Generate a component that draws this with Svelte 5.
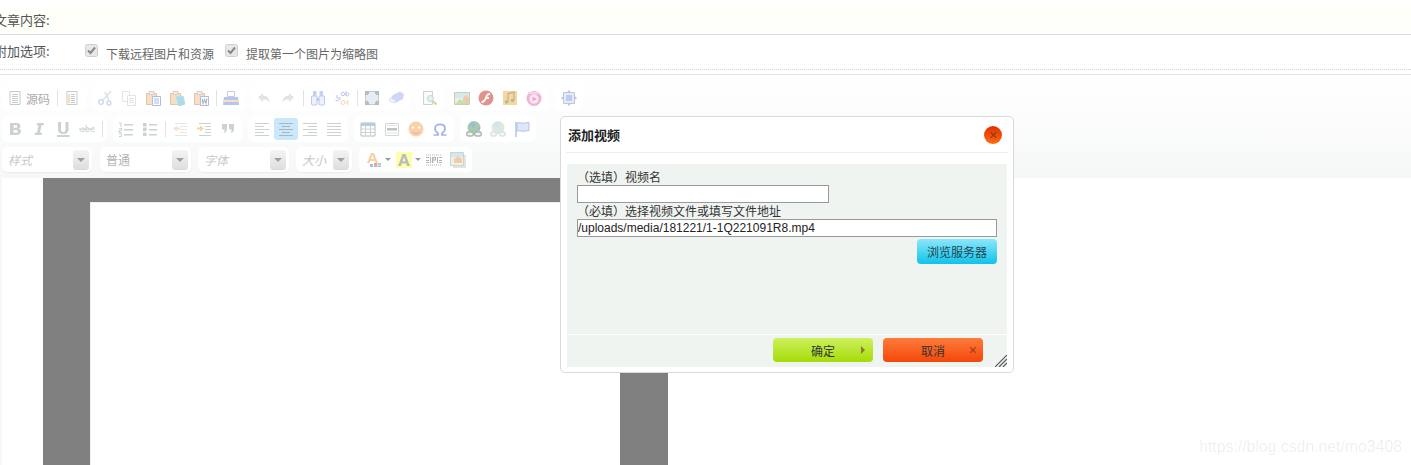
<script>
  const L = '#9aa7a3';
  const I = {
    doc: `<path d="M3 1.500h10v13H3z" fill="#fff" stroke="#8d9a96"/><path d="M5 4.500h6M5 6.500h6M5 8.500h6M5 10.500h6M5 12.500h6" stroke="#8d9a96"/>`,
    tpl: `<path d="M3 1.500h10v13H3z" fill="#fff" stroke="#8d9a96"/><path d="M7 4.500h4M7 6.500h4M7 8.500h4M7 10.500h4M7 12.500h4" stroke="#8d9a96"/><path d="M5 4v9" stroke="#f3a53c" stroke-width="1.400"/>`,
    cut: `<path d="M14 1 6 10M8 2l4 8" stroke="#b9c7dd" stroke-width="1.600"/><circle cx="4" cy="12" r="2.300" fill="none" stroke="#9fb4e4" stroke-width="1.400"/><circle cx="12" cy="13" r="2" fill="none" stroke="#9fb4e4" stroke-width="1.400"/>`,
    copy: `<path d="M1.500 1.500h7v10h-7z" fill="#fff" stroke="#c4cfcb"/><path d="M6.500 5.500h8v10h-8z" fill="#fff" stroke="#c4cfcb"/><path d="M8 8.500h5M8 10.500h5M8 12.500h5" stroke="#c4cfcb"/>`,
    paste: `<path d="M1.500 3.500h10v11h-10z" fill="#f2c08a" stroke="#c98d52"/><path d="M4 1.500h5v3H4z" fill="#e8e2d6" stroke="#a99"/><path d="M7.500 6.500h8v9h-8z" fill="#fff" stroke="#5f78cf"/><path d="M9 9h5M9 11h5M9 13h5" stroke="#5f78cf"/>`,
    pastet: `<path d="M1.500 3.500h10v11h-10z" fill="#f2c08a" stroke="#c98d52"/><path d="M4 1.500h5v3H4z" fill="#e8e2d6" stroke="#a99"/><path d="M7 7l7-1 2 8-6 2z" fill="#59b7e8" stroke="#7bb"/>`,
    pastew: `<path d="M1.500 3.500h10v11h-10z" fill="#f2c08a" stroke="#c98d52"/><path d="M4 1.500h5v3H4z" fill="#e8e2d6" stroke="#a99"/><path d="M7.500 6.500h8v9h-8z" fill="#fff" stroke="#5f78cf"/><path d="M9 8.500l1 5 1.500-4 1.500 4 1-5" fill="none" stroke="#566" stroke-width="1.100"/>`,
    print: `<path d="M4.500 1.500h7v5h-7z" fill="#fff" stroke="#8a97c9"/><path d="M1 7h14l1 8H0z" fill="#6f8be0"/><path d="M1 10h14v2H1z" fill="#f1c27d"/>`,
    undo: `<path d="M7 3 2 7.500 7 12V9.500c3 0 5 .5 6.500 3 0-4-2.500-7-6.500-7z" fill="#c4cbc8"/>`,
    redo: `<path d="M9 3l5 4.500L9 12V9.500c-3 0-5 .5-6.500 3 0-4 2.500-7 6.500-7z" fill="#c4cbc8"/>`,
    find: `<rect x="3" y="1" width="3.500" height="5" fill="#8ea2e8"/><rect x="9.500" y="1" width="3.500" height="5" fill="#8ea2e8"/><rect x="1.500" y="6" width="5.500" height="9" rx="1" fill="#dfe6fa" stroke="#7e93e0"/><rect x="9" y="6" width="5.500" height="9" rx="1" fill="#dfe6fa" stroke="#7e93e0"/><path d="M7 8h2v3H7z" fill="#7e93e0"/>`,
    replace: `<circle cx="9" cy="4" r="1.700" fill="none" stroke="#7e8fe0"/><path d="M12 1v5" stroke="#7e8fe0"/><circle cx="13.500" cy="4.500" r="1.500" fill="none" stroke="#7e8fe0"/><path d="M7 8H3V5M1.500 9.500 3 11l3-2" stroke="#7e8fe0" fill="none"/><circle cx="9" cy="12.500" r="2" fill="none" stroke="#e9b25f"/><path d="M15 11h-2v3h2" stroke="#e9b25f" fill="none"/>`,
    full: `<path d="M1.500 1.500h13v13h-13z" fill="#cfdcf0" stroke="#8e9c98"/><path d="M1 1h4v3H4v1H1zM11 1h4v4h-3V4h-1zM1 11h3v1h1v3H1zM12 11h3v4h-4v-3h1z" fill="#6f7f7c"/>`,
    erase: `<path d="M5 5 12 1.500 16 4 15 9 7 13 1 11z" fill="#9fb2ea"/><path d="M1 11l6 2 .5-3L2 8z" fill="#e6ecfa" stroke="#8ea2e8" stroke-width=".5"/>`,
    preview: `<path d="M2.500 1.500h9v13h-9z" fill="#f6f6f4" stroke="#9aa"/><circle cx="9.500" cy="8.500" r="3" fill="#cfe0f4" stroke="#8a9"/><path d="M11.500 11l4 3.500" stroke="#c99c4a" stroke-width="2"/>`,
    img: `<path d="M.5 2.500h15v12H.5z" fill="#d8e6c0" stroke="#a89a5a"/><path d="M1 3h14v5H1z" fill="#a9d0ee"/><path d="M1 14l5-5 3 2 3-3 3 3v3z" fill="#8fbf68"/><path d="M9 8l3-3 3 3v3H9z" fill="#e89060"/>`,
    flash: `<circle cx="8" cy="8" r="7.500" fill="#c8261a"/><path d="M12 3c-4 0-4 3-5 5s-2 3-3.500 3v2c3 0 4-2 5-4s1-4 3.500-4z" fill="#fff"/><path d="M7 7h4v2H7z" fill="#fff"/>`,
    music: `<path d="M1 1h14v14H1z" fill="#f1b13f"/><path d="M6 3.500l6-1.500v8.500" stroke="#7d6c3a" stroke-width="1.300" fill="none"/><path d="M6 3.500V12" stroke="#7d6c3a" stroke-width="1.300"/><circle cx="4.500" cy="12" r="1.700" fill="#7d6c3a"/><circle cx="10.500" cy="10.500" r="1.700" fill="#7d6c3a"/>`,
    video: `<circle cx="8" cy="8.500" r="7.500" fill="#e56cb0"/><circle cx="8" cy="9" r="4.500" fill="#fbd5ea"/><path d="M6.500 6.500 11 9l-4.500 2.500z" fill="#df4f9e"/><path d="M2 2h11v2H2z" fill="#f4a6cc"/>`,
    anyfile: `<path d="M8 0l2 2.500H6zM8 16l2-2.500H6zM0 8l2.500-2v4zM16 8l-2.500-2v4z" fill="#7c90b4"/><path d="M2.500 2.500h11v11h-11z" fill="#cbd7f4" stroke="#7c90b4"/><path d="M5 5h6v6H5z" fill="#7f98e6"/>`,
    bold: `<path d="M3 2h6.500c3 0 4 1.500 4 3 0 1.300-.8 2.200-2 2.600 1.600.4 2.500 1.400 2.500 3 0 2.300-1.700 3.400-4.500 3.400H3zm3.500 2.300V6.800h2.300c1 0 1.500-.5 1.500-1.300 0-.8-.5-1.200-1.500-1.200zm0 4.800v2.600h2.500c1 0 1.700-.4 1.700-1.300s-.7-1.300-1.700-1.300z" fill="${L}"/>`,
    italic: `<path d="M6 2h7l-.5 2.300h-2L9 11.700h2L10.500 14h-7L4 11.700h2L7.500 4.300h-2z" fill="${L}"/>`,
    under: `<path d="M3 1h3v7c0 2 .8 3 2.300 3 1.500 0 2.200-1 2.200-3V1h3v7.500c0 3-1.900 4.500-5.200 4.500S3 11.500 3 8.500zM2 14h12.500v2H2z" fill="${L}"/>`,
    strike: `<path d="M0 8h16" stroke="${L}"/><path d="M3 6.500c1.500 0 1.800.5 1.800 4H3c-1.300 0-1.800-.5-1.800-1.200S1.800 8 3.500 8M7 4v6.500M7 7c2-1 3-.5 3 1.500s-1 3-3 1.500M15.500 7c-2-1-3.500 0-3.500 1.700s1.500 2.700 3.500 1.600" stroke="${L}" fill="none"/>`,
    ol: `<path d="M1 2h2v4M1 7.500h2.500v2H1v2h2.500M1 13h2.500v2.500H1" stroke="${L}" fill="none"/><path d="M6 3h9v1.500H6zM6 8h9v1.500H6zM6 13h9v1.500H6z" fill="${L}"/>`,
    ul: `<path d="M1 2h3.500v3.500H1zM1 6.500h3.500V10H1zM1 11.500h3.500V15H1zM7 3h8v1.500H7zM7 8h8v1.500H7zM7 13h8v1.500H7z" fill="${L}"/>`,
    outdent: `<path d="M1 7.500 5 4.500v2h3v2H5v2z" fill="#f6c48e"/><path d="M3 2h12v1H3zM8 5h7v1H8zM8 8h7v1H8zM8 11h7v1H8zM3 14h12v1H3z" fill="#c9d1ce"/>`,
    indent: `<path d="M8 7.500 4 4.500v2H1v2h3v2z" fill="#f2a846"/><path d="M3 2h12v1H3zM9 5h6v1H9zM9 8h6v1H9zM9 11h6v1H9zM3 14h12v1H3z" fill="${L}"/>`,
    quote: `<path d="M2 3h5v5c0 2-1.500 4-3.500 4 .7-1 1.200-2 1.200-3.500H2zM9 3h5v5c0 2-1.500 4-3.500 4 .7-1 1.200-2 1.200-3.500H9z" fill="${L}"/>`,
    al: `<path d="M1 2h14v1H1zM1 5h9v1H1zM1 8h14v1H1zM1 11h9v1H1zM1 14h14v1H1z" fill="${L}"/>`,
    ac: `<path d="M1 2h14v1H1zM4 5h8v1H4zM1 8h14v1H1zM4 11h8v1H4zM1 14h14v1H1z" fill="#7c8b87"/>`,
    ar: `<path d="M1 2h14v1H1zM6 5h9v1H6zM1 8h14v1H1zM6 11h9v1H6zM1 14h14v1H1z" fill="${L}"/>`,
    aj: `<path d="M1 2h14v1H1zM1 5h14v1H1zM1 8h14v1H1zM1 11h14v1H1zM1 14h14v1H1z" fill="${L}"/>`,
    table: `<path d="M1 2h14v13H1z" fill="#fff" stroke="#6f8080"/><path d="M1 2h14v3H1z" fill="#7e98c4"/><path d="M1 8h14M1 11.500h14M5.500 5v10M10.500 5v10" stroke="#9aa9a6"/>`,
    hr: `<path d="M1.500 2.500h13v12h-13z" fill="#fff" stroke="#a8b2af"/><path d="M3 7h10v2.500H3z" fill="#7c8b87"/><path d="M3 4.500h10M3 12h10" stroke="#c3cbc8"/>`,
    smile: `<circle cx="8" cy="8" r="7.500" fill="#f7a34f"/><circle cx="5" cy="6.500" r="1.300" fill="#fff"/><circle cx="11" cy="6.500" r="1.300" fill="#fff"/><path d="M4 10.500c2 2.500 6 2.500 8 0" stroke="#b9602a" fill="none"/>`,
    omega: `<path d="M1.500 14H6v-1.800C4 11 3 9.500 3 7.500 3 4.800 5 3.300 8 3.300s5 1.500 5 4.200c0 2-1 3.500-3 4.700V14h4.500" stroke="#4d64cf" stroke-width="1.700" fill="none"/>`,
    link: `<circle cx="8" cy="6.500" r="6.500" fill="#4f9b5d"/><path d="M3 4l4-3 3 3-2 3zM10 8l4-2v3z" fill="#3d74c0"/><path d="M1 10.500h14v2H1z" fill="#4f9b5d"/><rect x=".7" y="11" width="6.600" height="4" rx="2" fill="#dfe7e4" stroke="#5f6f6c" stroke-width="1.400"/><rect x="8.700" y="11" width="6.600" height="4" rx="2" fill="#dfe7e4" stroke="#5f6f6c" stroke-width="1.400"/>`,
    unlink: `<circle cx="8" cy="6.500" r="6.500" fill="#b8d7be"/><path d="M3 4l4-3 3 3-2 3z" fill="#a9c4e8"/><rect x=".7" y="11" width="5.600" height="4" rx="2" fill="#eef2f0" stroke="#bcc7c4" stroke-width="1.400"/><rect x="9.700" y="11" width="5.600" height="4" rx="2" fill="#eef2f0" stroke="#bcc7c4" stroke-width="1.400"/>`,
    anchor: `<path d="M2 1v15" stroke="#6a86d8" stroke-width="1.500"/><path d="M3 2c3-1 5 1 8 0 1.500-.3 3-.5 4-.5v8c-1 0-2.500.2-4 .5-3 1-5-1-8 0z" fill="#bfcff2" stroke="#6a86d8"/>`,
    fc: `<path d="M5 1h3l4 10H9.500l-.7-2H4.300l-.7 2H1zM5 7h3L6.500 3z" fill="#f5a84a"/><path d="M8 11h3v4H8z" fill="#dd4d40"/><path d="M11.500 11h3.500v2h-3.500z" fill="#56b85e"/><path d="M11.500 13.500h3.500V15h-3.500zM4 12h3v3H4z" fill="#5379dc"/>`,
    bc: `<path d="M0 0h16v16H0z" fill="#ffff5a"/><path d="M6.500 2h3L14 14h-3l-.8-2.500H5.800L5 14H2zM6.600 9.300h2.800L8 5z" fill="#74807c"/>`,
    nbsp: `<path d="M0 3h16M0 13h16" stroke="#5f6d6a" stroke-dasharray="1 1"/><path d="M0 5h3v1H0zM0 8h3v1H0zM0 10h3v1H0zM13 5h3v1h-3zM13 8h3v1h-3zM13 10h3v1h-3zM4 5h1v6H4zM6 5h4v3.500H7.300V11H6zM7.300 6v1.500h1.500V6zM11 5h1v6h-1z" fill="#5f6d6a"/>`,
    pagebreak: `<path d="M.5 .5h13v13H.5z" fill="#dde6cf" stroke="#a0aa9a"/><path d="M1 1h12v4H1z" fill="#a9cee8"/><path d="M4 7l4-3 4 3v4H4z" fill="#e89a5a"/><path d="M14 3h2v13H3v-2h11z" fill="#c5cbc7"/>`
  };
  const rows = [
    [
      { items: ['source', 's', 'tpl'] },
      { items: ['cut', 'copy', 'paste', 'pastet', 'pastew', 's', 'print'] },
      { items: ['undo', 'redo', 's', 'find', 'replace', 's', 'full', 'erase'] },
      { items: ['preview'] },
      { items: ['img', 'flash', 'music', 'video'] },
      { items: ['anyfile'], cls: 'g6' }
    ],
    [
      { items: ['bold', 'italic', 'under', 'strike', 's'] },
      { items: ['ol', 'ul', 's', 'outdent', 'indent', 'quote'], cls: 'gp' },
      { items: ['al', 'ac', 'ar', 'aj'], cls: 'gp' },
      { items: ['table', 'hr', 'smile', 'omega'], cls: 'gp' },
      { items: ['link', 'unlink', 'anchor'], cls: 'gp' }
    ]
  ];
  const combos = [
    { t: '样式', w: 90, it: true, ml: 0 },
    { t: '普通', w: 91, it: false, ml: 1 },
    { t: '字体', w: 91, it: true, ml: 0 },
    { t: '大小', w: 56, it: true, ml: 0 }
  ];
</script>

<div class="page">
  <div class="row-content"><span class="lbl">文章内容:</span></div>
  <div class="row-extra">
    <span class="lbl lbl2">附加选项:</span>
    <span class="check first">
      <svg width="13" height="13" viewBox="0 0 13 13"><rect x=".5" y=".5" width="12" height="12" rx="2" fill="#e8e8e8" stroke="#cfcfcf"/><path d="M3 6.500 5.500 9 10 3.500" fill="none" stroke="#888" stroke-width="2"/></svg>
    </span>
    <span class="opt">下载远程图片和资源</span>
    <span class="check second">
      <svg width="13" height="13" viewBox="0 0 13 13"><rect x=".5" y=".5" width="12" height="12" rx="2" fill="#e8e8e8" stroke="#cfcfcf"/><path d="M3 6.500 5.500 9 10 3.500" fill="none" stroke="#888" stroke-width="2"/></svg>
    </span>
    <span class="opt">提取第一个图片为缩略图</span>
  </div>
  <div class="toolbar">
    {#each rows as row}
      <div class="tb-row">
        {#each row as g}
          <div class="g {g.cls ?? ''}">
            {#each g.items as it}
              {#if it === 's'}
                <span class="sep"></span>
              {:else if it === 'source'}
                <span class="btn source">
                  <svg class="ic" width="16" height="16" viewBox="0 0 16 16">{@html I.doc}</svg>
                  <span class="src">源码</span>
                </span>
              {:else}
                <span class="btn" class:on={it === 'ac'}>
                  <svg class="ic" width="16" height="16" viewBox="0 0 16 16">{@html I[it]}</svg>
                </span>
              {/if}
            {/each}
          </div>
        {/each}
      </div>
    {/each}
    <div class="tb-row r3">
      {#each combos as c}
        <div class="combo" style="width:{c.w}px;margin-left:{c.ml}px">
          <span class="ctext" class:it={c.it}>{c.t}</span>
          <span class="cbtn"><i></i></span>
        </div>
      {/each}
      <div class="g last">
        <span class="btn wide"><svg class="ic" width="16" height="16" viewBox="0 0 16 16">{@html I.fc}</svg><i class="car"></i></span>
        <span class="btn wide"><svg class="ic" width="16" height="16" viewBox="0 0 16 16">{@html I.bc}</svg><i class="car"></i></span>
        <span class="btn"><svg class="ic" width="16" height="16" viewBox="0 0 16 16">{@html I.nbsp}</svg></span>
        <span class="btn"><svg class="ic" width="16" height="16" viewBox="0 0 16 16">{@html I.pagebreak}</svg></span>
      </div>
    </div>
  </div>
  <div class="editor">
    <div class="canvas"><div class="sheet"></div></div>
  </div>

  <div class="dialog">
    <div class="d-head">
      <span class="d-title">添加视频</span>
      <span class="d-close">×</span>
    </div>
    <div class="d-body">
      <div class="d-main">
        <div class="f-label">（选填）视频名</div>
        <input class="inp short" value="" />
        <div class="f-label l2">（必填）选择视频文件或填写文件地址</div>
        <input class="inp" value="/uploads/media/181221/1-1Q221091R8.mp4" />
        <div class="browse-wrap"><span class="browse">浏览服务器</span></div>
      </div>
      <div class="d-foot">
        <span class="act ok">确定<i class="tri"></i></span>
        <span class="act cancel">取消<i class="x">×</i></span>
        <svg class="grip" width="12" height="12" viewBox="0 0 12 12"><path d="M0 12 12 0M4 12 12 4M8 12 12 8" stroke="#555" stroke-width="1.200"/></svg>
      </div>
    </div>
  </div>

  <div class="mark">https://blog.csdn.net/mo3408</div>
</div>

<style>
  :global(body) { margin: 0; background: #fff; }
  .page {
    position: relative;
    width: 1411px;
    height: 465px;
    overflow: hidden;
    background: #fff;
    font-family: "Noto Sans CJK SC", "Liberation Sans", sans-serif;
    font-size: 12px;
    color: #666;
  }
  .row-content {
    margin-top: 6px;
    height: 28px;
    background: #fefff8;
    border-bottom: 1px solid #dcdcdc;
    display: flex;
    align-items: center;
  }
  .lbl { margin-left: -6px; font-size: 13px; color: #555; line-height: 28px; }
  .row-extra {
    height: 34px;
    border-bottom: 1px dotted #d4d4d4;
    display: flex;
    align-items: center;
  }
  .lbl2 { width: 91px; flex: none; margin-top: -3px; }
  .check { display: flex; margin-top: -3px; }
  .check.second { margin-left: 11px; }
  .opt { margin-left: 8px; padding-top: 2px; font-size: 12px; color: #666; }
  .toolbar {
    margin-top: 4px;
    height: 104px;
    box-sizing: border-box;
    border-top: 1px solid #e3e3e3;
    padding: 10px 0 0 2px;
    background: linear-gradient(#fff, #f6f8f7);
    display: flex;
    flex-direction: column;
    gap: 5px;
  }
  .tb-row { display: flex; gap: 6px; height: 26px; }
  .g {
    display: flex;
    align-items: center;
    background: rgba(255, 255, 255, .85);
    border-radius: 5px;
    padding: 0 2px 0 1px;
    height: 26px;
  }
  .g.gp { padding-left: 2px; }
  .g.gp:nth-child(2) { padding-left: 1px; }
  .g.g6 { margin-left: 1px; padding: 0 2px; }
  .btn {
    flex: none;
    width: 24px;
    height: 22px;
    display: flex;
    align-items: center;
    justify-content: center;
    border-radius: 3px;
    position: relative;
  }
  .btn.on { background: #cbe7fb; }
  .ic { opacity: .5; flex: none; }
  .btn.source { width: 51px; justify-content: flex-start; padding-left: 4px; box-sizing: border-box; gap: 3px; }
  .src { font-size: 12px; color: #aaa; white-space: nowrap; }
  .sep { flex: none; width: 1px; height: 16px; margin: 0 2px 0 3px; background: #dfe3e1; }
  .r3 { gap: 7px; height: 25px; }
  .combo {
    flex: none;
    height: 25px;
    box-sizing: border-box;
    background: #fff;
    border-radius: 5px;
    box-shadow: 0 1px 1px #ececec;
    display: flex;
    align-items: center;
    justify-content: space-between;
    padding: 0 3px 0 6px;
  }
  .ctext { font-size: 12px; color: #b4b4b4; }
  .ctext.it { font-style: italic; color: #c8c8c8; }
  .cbtn {
    flex: none;
    width: 16px;
    height: 19px;
    border-radius: 3px;
    background: linear-gradient(#f5f4f4, #dfdddd);
    box-shadow: 0 1px 0 #d8d8d8;
    display: flex;
    align-items: center;
    justify-content: center;
  }
  .cbtn i {
    width: 0; height: 0;
    border: 4px solid transparent;
    border-top-color: #a0a0a0;
    border-bottom: 0;
  }
  .g.last { height: 25px; padding: 0 2px 0 3px; }
  .btn.wide { width: 30px; justify-content: flex-start; padding-left: 4px; box-sizing: border-box; gap: 3px; }
  .car {
    width: 0; height: 0;
    border: 3px solid transparent;
    border-top-color: #999;
    border-bottom: 0;
  }
  .editor {
    width: 666px;
    margin-left: 2px;
    height: 287px;
    padding-left: 41px;
    box-sizing: border-box;
    background: #fff;
    box-shadow: -2px 0 0 #f8f8f8;
  }
  .canvas {
    height: 100%;
    background: #808080;
    padding: 24px 48px 0 47px;
    box-sizing: border-box;
  }
  .sheet {
    height: 100%;
    background: #fff;
    box-shadow: inset 1px 1px 0 #eee;
  }
  .dialog {
    position: absolute;
    left: 560px;
    top: 116px;
    width: 454px;
    height: 257px;
    box-sizing: border-box;
    background: #fff;
    border: 1px solid #d9d9d9;
    border-radius: 5px;
    padding: 0 6px 5px;
    display: flex;
    flex-direction: column;
    color: #333;
  }
  .d-head {
    height: 35px;
    margin: 0 -1px;
    padding: 0 2px;
    border-bottom: 1px solid #eee;
    display: flex;
    align-items: center;
    justify-content: space-between;
    flex: none;
  }
  .d-title { font-size: 13px; font-weight: 700; color: #222; }
  .d-close {
    width: 18px;
    height: 18px;
    margin-right: 4px;
    border-radius: 50%;
    background: linear-gradient(#e03000, #ff6a10);
    color: #8a3a18;
    font: 14px/18px "Liberation Sans", sans-serif;
    text-align: center;
  }
  .d-body {
    margin-top: 11px;
    flex: 1;
    display: flex;
    flex-direction: column;
    background: #eff4f1;
    border-radius: 2px 2px 0 0;
  }
  .d-main {
    flex: 1;
    padding: 5px 10px 0;
    display: flex;
    flex-direction: column;
    align-items: stretch;
  }
  .f-label { font-size: 12px; line-height: 16px; color: #333; }
  .inp {
    display: block;
    width: 420px;
    height: 18px;
    box-sizing: border-box;
    border: 1px solid #999;
    background: #fff;
    padding: 0;
    font: 12px "Liberation Sans", sans-serif;
    color: #222;
    outline: none;
  }
  .inp.short { width: 252px; }
  .browse-wrap { display: flex; justify-content: flex-end; margin-top: 2px; }
  .browse {
    width: 80px;
    height: 25px;
    border-radius: 4px;
    background: linear-gradient(#8be6fb, #10c3ea);
    font-size: 12px;
    line-height: 25px;
    text-align: center;
    color: #1d4650;
  }
  .d-foot {
    position: relative;
    flex: none;
    height: 33px;
    border-top: 1px solid #fff;
    display: flex;
    justify-content: flex-end;
    align-items: flex-start;
    padding: 3px 24px 0 0;
    gap: 10px;
    box-sizing: border-box;
  }
  .act {
    position: relative;
    width: 100px;
    height: 24px;
    border-radius: 4px;
    font-size: 12px;
    line-height: 26px;
    text-align: center;
    color: #333;
  }
  .ok { background: linear-gradient(#cdf05e, #a6dc08); }
  .cancel { background: linear-gradient(#ff7b3a, #f2480a); }
  .tri {
    position: absolute;
    right: 8px;
    top: 8px;
    width: 0; height: 0;
    border: 4px solid transparent;
    border-left-color: #8a7a3a;
    border-right: 0;
  }
  .x {
    position: absolute;
    right: 6px;
    top: 0;
    font: normal 14px/24px "Liberation Sans", sans-serif;
    color: #a03a18;
  }
  .grip { position: absolute; right: 0; bottom: 0; }
  .mark {
    position: absolute;
    right: 9px;
    top: 438px;
    font: 15.800px "Liberation Sans", sans-serif;
    color: rgba(0, 0, 0, .08);
    white-space: nowrap;
  }
</style>
